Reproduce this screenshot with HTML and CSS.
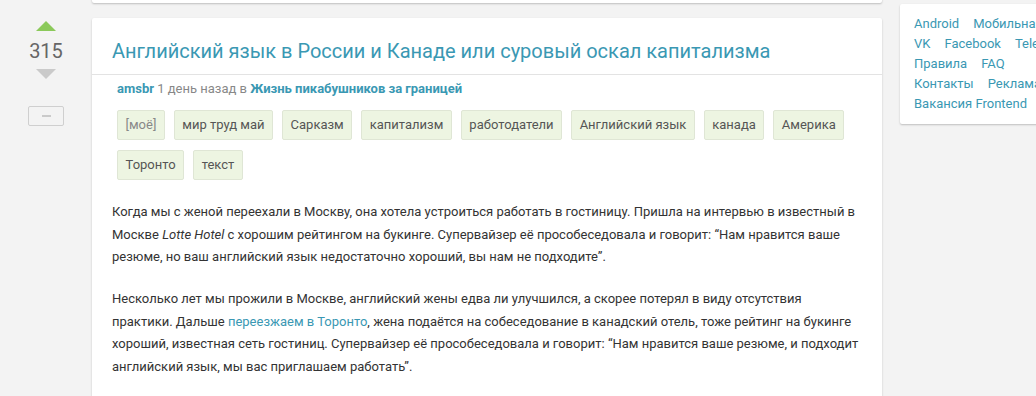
FILE: index.html
```html
<!DOCTYPE html>
<html lang="ru">
<head>
  <meta charset="UTF-8">
  <title>Английский язык в России и Канаде или суровый оскал капитализма</title>
  <link rel="stylesheet" href="styles.css">
</head>
<body>
  <div class="votes">
    <span class="arrow up"></span>
    <span class="rating">315</span>
    <span class="arrow down"></span>
    <button class="collapse"><span></span></button>
  </div>

  <main class="feed">
    <div class="card stub"></div>

    <article class="card story">
      <header class="story-head">
        <h1><a href="#">Английский язык в России и Канаде или суровый оскал капитализма</a></h1>
      </header>

      <div class="meta">
        <a href="#" class="author">amsbr</a> 1 день назад в <a href="#" class="community">Жизнь пикабушников за границей</a>
      </div>

      <div class="tags">
        <span class="tag mine">[моё]</span>
        <span class="tag">мир труд май</span>
        <span class="tag">Сарказм</span>
        <span class="tag">капитализм</span>
        <span class="tag">работодатели</span>
        <span class="tag">Английский язык</span>
        <span class="tag">канада</span>
        <span class="tag">Америка</span>
        <span class="tag">Торонто</span>
        <span class="tag">текст</span>
      </div>

      <div class="content">
        <p>Когда мы с женой переехали в Москву, она хотела устроиться работать в гостиницу. Пришла на интервью в известный в Москве <i>Lotte Hotel</i> с хорошим рейтингом на букинге. Супервайзер её прособеседовала и говорит: “Нам нравится ваше резюме, но ваш английский язык недостаточно хороший, вы нам не подходите”.</p>
        <p>Несколько лет мы прожили в Москве, английский жены едва ли улучшился, а скорее потерял в виду отсутствия практики. Дальше <a href="#">переезжаем в Торонто</a>, жена подаётся на собеседование в канадский отель, тоже рейтинг на букинге хороший, известная сеть гостиниц. Супервайзер её прособеседовала и говорит: “Нам нравится ваше резюме, и подходит английский язык, мы вас приглашаем работать”.</p>
      </div>
    </article>
  </main>

  <aside class="card sidebar">
    <div class="links"><a href="#">Android</a><a href="#">Мобильная версия</a></div>
    <div class="links"><a href="#">VK</a><a href="#">Facebook</a><a href="#">Telegram</a></div>
    <div class="links"><a href="#">Правила</a><a href="#">FAQ</a></div>
    <div class="links"><a href="#">Контакты</a><a href="#">Реклама</a></div>
    <div class="links"><a href="#">Вакансия Frontend</a></div>
  </aside>
</body>
</html>
```

FILE: styles.css
```css
html, body {
  margin: 0;
  padding: 0;
  background-color: #f3f3f3;
  font-family: Roboto, 'Liberation Sans', Arial, sans-serif;
  color: #333;
  overflow: hidden;
}

body {
  display: flex;
  align-items: flex-start;
  width: 1036px;
  height: 396px;
}

a {
  color: #3a98b3;
  text-decoration: none;
}

.card {
  background-color: #fff;
  border-radius: 2px;
  box-shadow: 0 1px 2px rgba(0, 0, 0, 0.22);
}

/* vote column */
.votes {
  flex: 0 0 92px;
  display: flex;
  flex-direction: column;
  align-items: center;
  padding-top: 21px;
}

.arrow {
  width: 0;
  height: 0;
  border-left: 10px solid transparent;
  border-right: 10px solid transparent;
}

.arrow.up {
  border-bottom: 10px solid #8bc95a;
}

.arrow.down {
  margin-top: 6px;
  border-top: 10px solid #cacaca;
}

.rating {
  margin-top: 8px;
  font-size: 20px;
  line-height: 24px;
  color: #666;
}

.collapse {
  margin-top: 27px;
  width: 36px;
  height: 20px;
  padding: 0;
  border: 1px solid #cfcfcf;
  border-radius: 2px;
  background: transparent;
  display: flex;
  align-items: center;
  justify-content: center;
}

.collapse span {
  width: 9px;
  height: 2px;
  background-color: #cacaca;
}

/* feed */
.feed {
  flex: 0 0 787px;
}

.stub {
  height: 20px;
  margin-top: -17px;
}

.story {
  margin-top: 15px;
  padding-bottom: 30px;
}

.story-head {
  padding: 19px 20px 9px;
  border-bottom: 1px solid #e3e3e3;
}

.story-head h1 {
  margin: 0;
  font-size: 20px;
  font-weight: 400;
  line-height: 28px;
}

.meta {
  margin: 5px 25px 0;
  font-size: 13px;
  line-height: 18px;
  color: #888;
}

.meta a {
  font-weight: 700;
}

.tags {
  display: flex;
  flex-wrap: wrap;
  gap: 10px 9px;
  margin: 12px 25px 0;
  width: 740px;
}

.tag {
  padding: 0 7.5px;
  font-size: 13px;
  line-height: 28px;
  color: #555;
  background-color: #edf5e2;
  border: 1px solid #dfe6d5;
  border-radius: 2px;
}

.tag.mine {
  color: #888;
}

.content {
  margin-top: 21px;
  padding: 0 20px;
  font-size: 13px;
  line-height: 22.5px;
}

.content p {
  margin: 0 0 19.5px;
}

/* sidebar */
.sidebar {
  flex: 0 0 240px;
  margin: 4px 0 0 18px;
  padding: 10px 14px;
}

.links {
  display: flex;
  gap: 14px;
  font-size: 13px;
  line-height: 20px;
  white-space: nowrap;
}
```
